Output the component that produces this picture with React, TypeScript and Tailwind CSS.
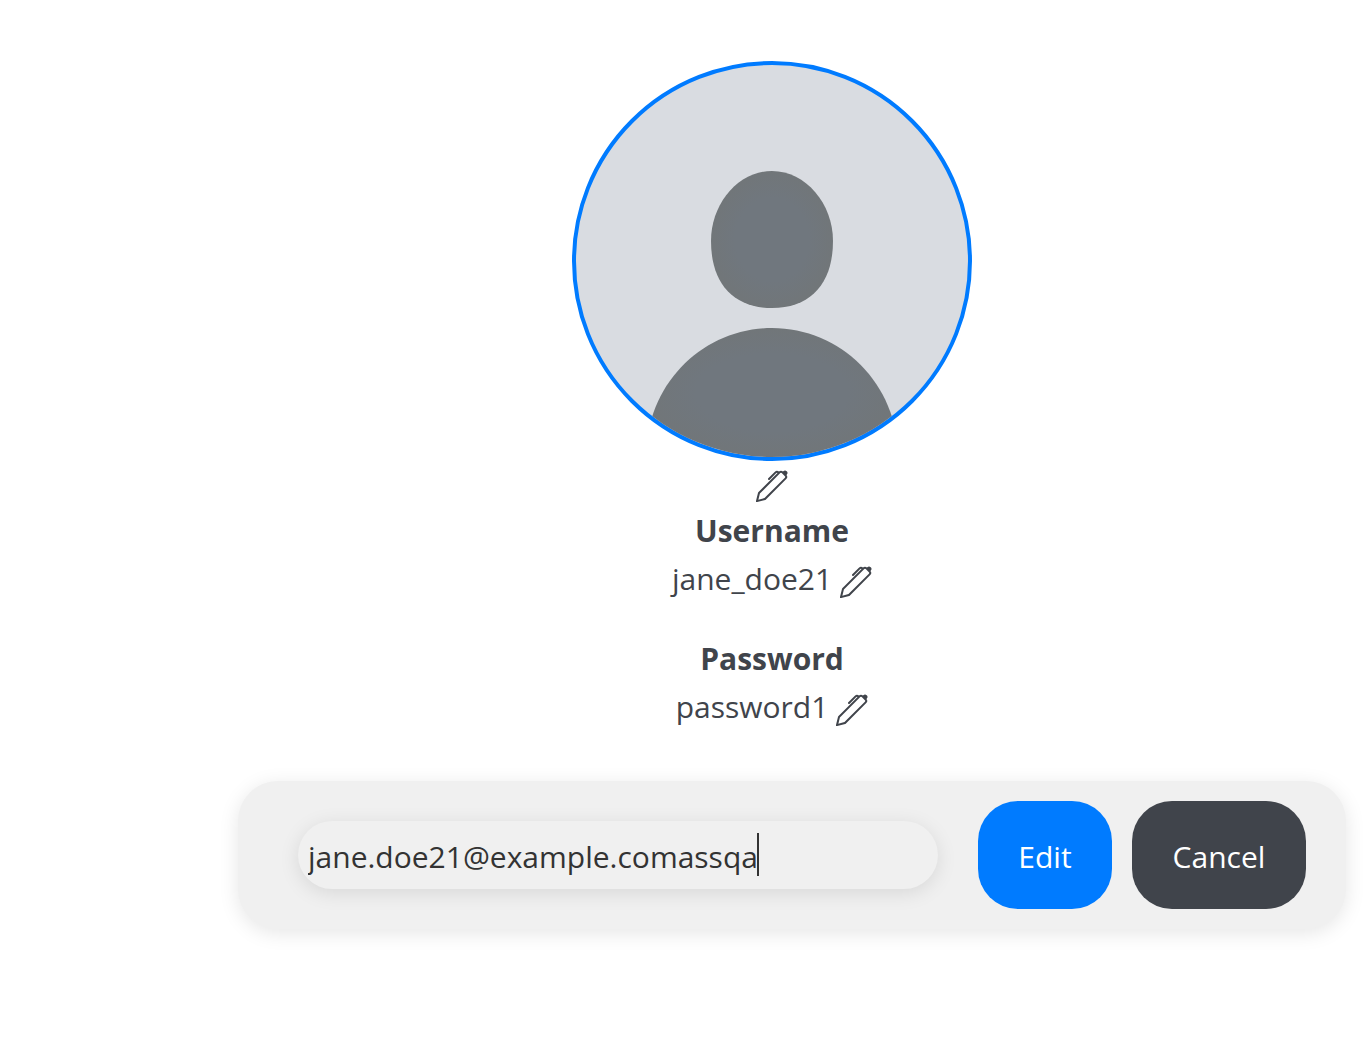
import { useState } from "react";
import { BsPen } from "react-icons/bs";

function EditButton({ label }: { label: string }) {
  return (
    <button type="button" aria-label={label} className="shrink-0 cursor-pointer">
      <BsPen size={32} />
    </button>
  );
}

function Avatar() {
  return (
    <svg
      viewBox="0 0 392 392"
      role="img"
      aria-label="Profile picture"
      className="size-[400px] rounded-full border-4 border-[#007bff] bg-[#d9dce1]"
    >
      <defs>
        <radialGradient id="figure">
          <stop offset="0.6" stopColor="#70777e" />
          <stop offset="1" stopColor="#717679" />
        </radialGradient>
      </defs>
      <g fill="url(#figure)">
        <path d="M196 106C230 106 257 139 257 176C257 217 236 243 196 243C156 243 135 217 135 176C135 139 162 106 196 106Z" />
        <path d="M70 392C70 318 128 263 196 263C264 263 322 318 322 392Z" />
      </g>
    </svg>
  );
}

function Field({ name, value }: { name: string; value: string }) {
  return (
    <section className="flex flex-col items-center">
      <h2 className="font-bold">{name}</h2>
      <div className="flex items-center gap-2">
        <span>{value}</span>
        <span className="flex pt-1.5">
          <EditButton label={`Edit ${name.toLowerCase()}`} />
        </span>
      </div>
    </section>
  );
}

export default function App() {
  const [email, setEmail] = useState("jane.doe21@example.comassqa");

  return (
    <main className="min-h-screen bg-white pl-[174px] pt-[61px] font-['Open_Sans','Noto_Sans',sans-serif] text-[30px] leading-[48px] text-[#40444b]">
      <div className="flex flex-col items-center">
        <Avatar />
        <div className="flex pt-[9px] pb-[5px]">
          <EditButton label="Edit profile picture" />
        </div>
        <div className="flex flex-col gap-8">
          <Field name="Username" value="jane_doe21" />
          <Field name="Password" value="password1" />
        </div>
      </div>

      <form
        onSubmit={(e) => e.preventDefault()}
        className="mt-[50px] mr-6 ml-16 flex items-center rounded-[40px] bg-[#f0f0f0] py-5 pr-10 pl-[60px] shadow-[0_4px_20px_rgba(0,0,0,0.1)]"
      >
        <div className="relative mr-10 min-w-0 flex-1">
          <input
            type="email"
            aria-label="Email"
            value={email}
            onChange={(e) => setEmail(e.target.value)}
            className="block h-[68px] w-full rounded-[40px] bg-[#f0f0f0] px-[10px] pt-0.5 text-[#333333] shadow-[0_4px_20px_rgba(0,0,0,0.1)] outline-none"
          />
          <span aria-hidden="true" className="absolute top-3 left-[459px] h-[43px] w-0.5 bg-[#333333]" />
        </div>
        <div className="flex gap-5 text-white">
          <button type="submit" className="h-[108px] w-[134px] cursor-pointer rounded-[40px] bg-[#007bff] pt-1">
            Edit
          </button>
          <button type="button" className="h-[108px] w-[174px] cursor-pointer rounded-[40px] bg-[#40444b] pt-1">
            Cancel
          </button>
        </div>
      </form>
    </main>
  );
}
